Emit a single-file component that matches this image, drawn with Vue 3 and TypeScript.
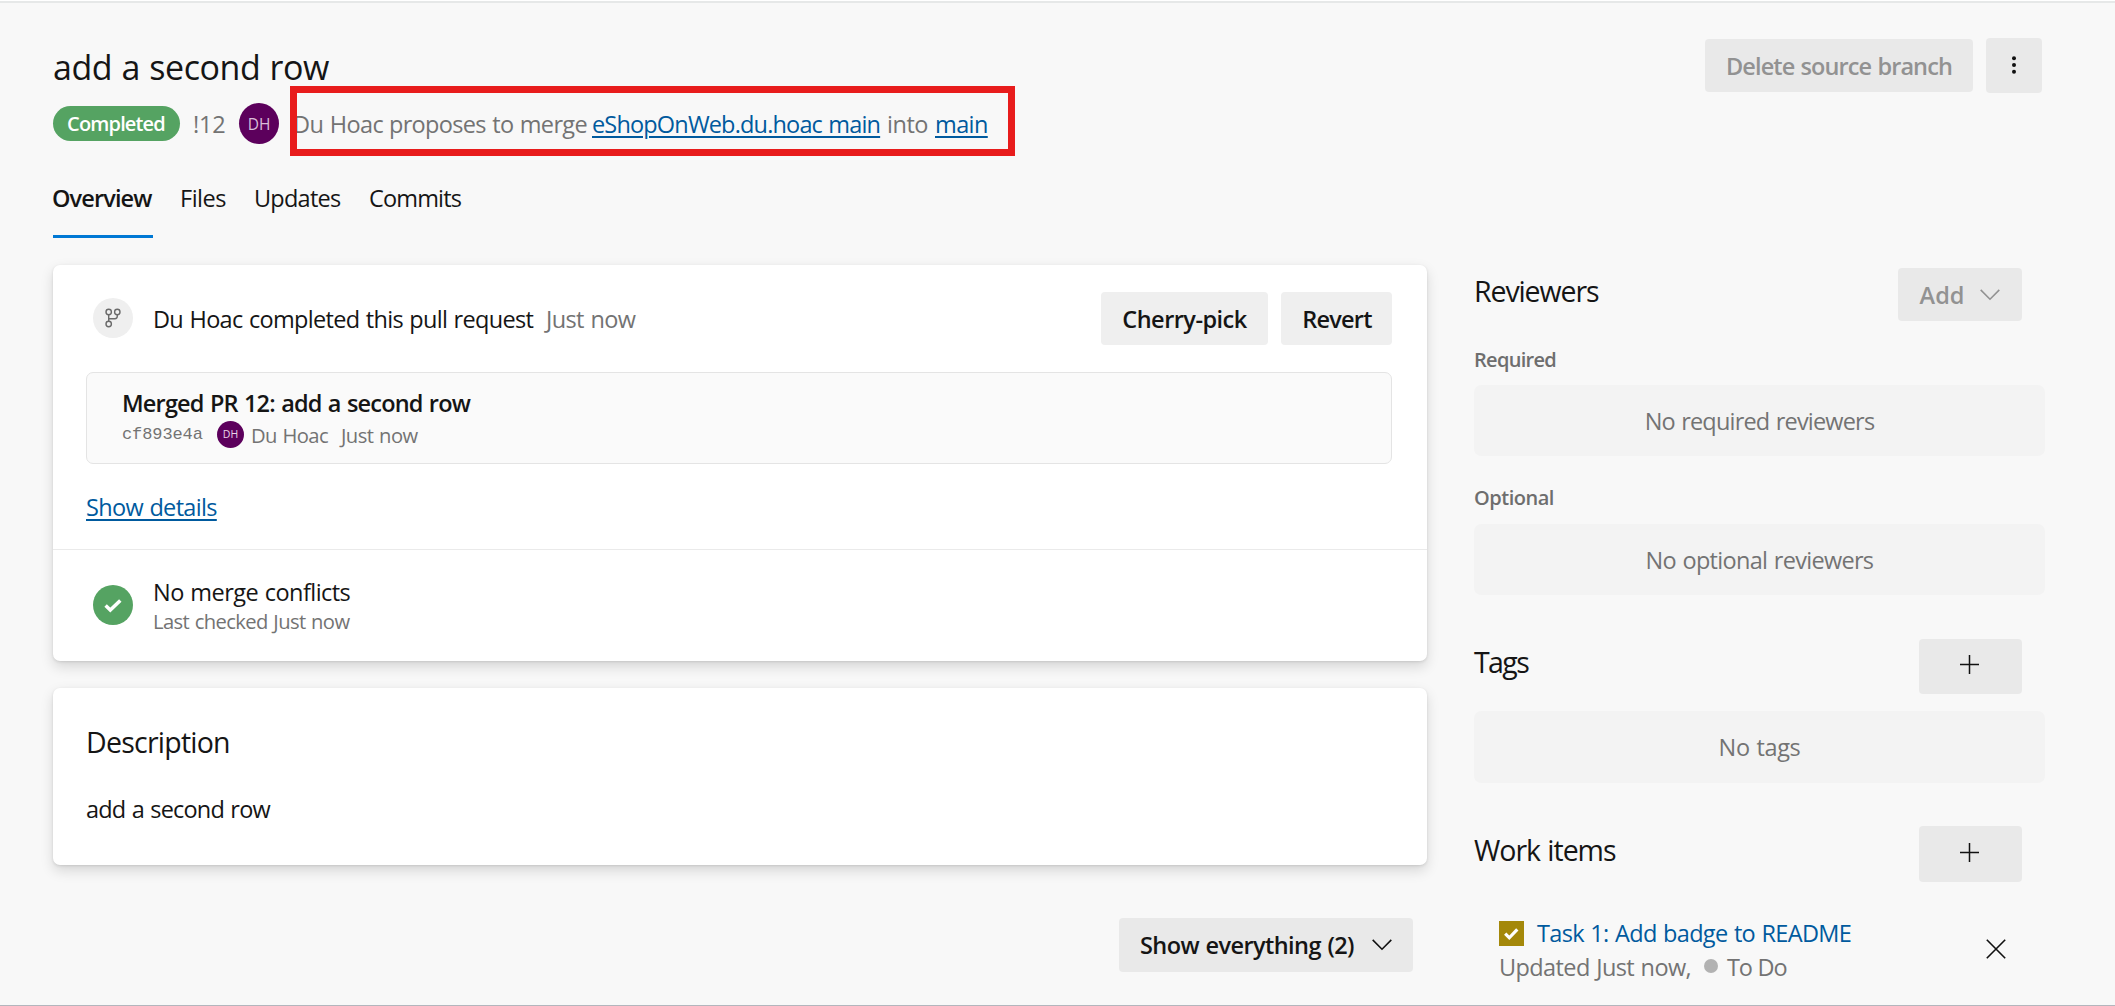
<script setup lang="ts">
interface Tab {
  id: string
  label: string
}

const tabs: Tab[] = [
  { id: 'overview', label: 'Overview' },
  { id: 'files', label: 'Files' },
  { id: 'updates', label: 'Updates' },
  { id: 'commits', label: 'Commits' },
]
const activeTab = 'overview'
</script>

<template>
  <div class="page">
    <header class="header">
      <div class="header-main">
        <h1 class="title">add a second row</h1>
        <div class="meta">
          <span class="badge">Completed</span>
          <span class="pr-id">!12</span>
          <span class="avatar">DH</span>
          <div class="proposal">
            <span class="author">Du Hoac</span>
            <span class="proposes">proposes to merge</span>
            <a class="link source">eShopOnWeb.du.hoac main</a>
            <span class="into">into</span>
            <a class="link target">main</a>
            <div class="highlight"></div>
          </div>
        </div>
        <nav class="tabs">
          <a v-for="tab in tabs" :key="tab.id" class="tab" :class="[tab.id, { active: tab.id === activeTab }]">{{ tab.label }}</a>
        </nav>
      </div>
      <div class="actions">
        <button class="btn delete" disabled>Delete source branch</button>
        <button class="btn more" aria-label="More options">
          <svg width="6" height="20" viewBox="0 0 6 20" fill="#111">
            <circle cx="3" cy="3.2" r="2" /><circle cx="3" cy="10" r="2" /><circle cx="3" cy="16.8" r="2" />
          </svg>
        </button>
      </div>
    </header>

    <div class="body">
      <main class="main">
        <section class="card status">
          <div class="status-row">
            <span class="branch-icon">
              <svg width="40" height="40" viewBox="0 0 40 40" fill="none" stroke="#6a6a6a" stroke-width="1.4">
                <circle cx="15.7" cy="14" r="2.7" /><circle cx="24.3" cy="14" r="2.7" /><circle cx="15.7" cy="26" r="2.7" />
                <path d="M15.7 16.7v6.6M24.3 16.7v1.6q0 2.4-2.4 2.4h-6.2" />
              </svg>
            </span>
            <span class="completed">Du Hoac completed this pull request</span>
            <span class="when">Just now</span>
            <button class="btn light cherry">Cherry-pick</button>
            <button class="btn light revert">Revert</button>
          </div>
          <div class="merge">
            <div class="merge-title">Merged PR 12: add a second row</div>
            <div class="merge-info">
              <span class="hash">cf893e4a</span>
              <span class="avatar small">DH</span>
              <span class="merge-author">Du Hoac</span>
              <span class="merge-when">Just now</span>
            </div>
          </div>
          <div class="details"><a class="link">Show details</a></div>
          <div class="conflicts">
            <svg class="ok" width="40" height="40" viewBox="0 0 40 40">
              <circle cx="20" cy="20" r="20" fill="#55a362" />
              <path d="M12.6 20.6l4.7 4.5 10-9.6" fill="none" stroke="#fff" stroke-width="3.5" />
            </svg>
            <div>
              <div class="conflict-title">No merge conflicts</div>
              <div class="conflict-sub">Last checked Just now</div>
            </div>
          </div>
        </section>

        <section class="card description">
          <h2 class="desc-heading">Description</h2>
          <p class="desc-text">add a second row</p>
        </section>

        <div class="filter">
          <button class="btn show-all">
            <span>Show everything (2)</span>
            <svg width="20" height="12" viewBox="0 0 20 12" fill="none" stroke="#111" stroke-width="1.6"><path d="M.7.9L10 10.2 19.3.9" /></svg>
          </button>
        </div>
      </main>

      <aside class="side">
        <div class="side-head reviewers">
          <h2>Reviewers</h2>
          <button class="btn add" disabled>
            <span>Add</span>
            <svg width="20" height="12" viewBox="0 0 20 12" fill="none" stroke="#929292" stroke-width="1.6"><path d="M.7.9L10 10.2 19.3.9" /></svg>
          </button>
        </div>
        <div class="label required">Required</div>
        <div class="empty no-required">No required reviewers</div>
        <div class="label optional">Optional</div>
        <div class="empty no-optional">No optional reviewers</div>

        <div class="side-head tags">
          <h2>Tags</h2>
          <button class="btn plus" aria-label="Add tag">
            <svg width="19" height="19" viewBox="0 0 19 19" stroke="#111" stroke-width="1.5"><path d="M9.5 0v19M0 9.5h19" /></svg>
          </button>
        </div>
        <div class="empty no-tags">No tags</div>

        <div class="side-head work">
          <h2>Work items</h2>
          <button class="btn plus" aria-label="Add work item">
            <svg width="19" height="19" viewBox="0 0 19 19" stroke="#111" stroke-width="1.5"><path d="M9.5 0v19M0 9.5h19" /></svg>
          </button>
        </div>
        <div class="item">
          <div class="item-text">
            <div class="item-title">
              <svg width="25" height="25" viewBox="0 0 25 25">
                <rect width="25" height="25" fill="#a4880a" />
                <path d="M6.2 12.6l4.1 4.2 8-8.4" fill="none" stroke="#fff" stroke-width="3.2" />
              </svg>
              <a>Task 1: Add badge to README</a>
            </div>
            <div class="item-info">
              <span class="updated">Updated Just now,</span>
              <i class="dot"></i>
              <span class="state">To Do</span>
            </div>
          </div>
          <svg class="remove" width="20" height="20" viewBox="0 0 20 20" stroke="#111" stroke-width="1.6"><path d="M.8.8l18.4 18.4M19.2.8L.8 19.2" /></svg>
        </div>
      </aside>
    </div>
  </div>
</template>

<style>
body {
  margin: 0;
  background: #f8f8f8;
}
</style>

<style scoped>
* {
  box-sizing: border-box;
}

.page {
  width: 2115px;
  height: 1006px;
  overflow: hidden;
  display: flex;
  flex-direction: column;
  background: #f8f8f8;
  border-top: 1px solid #fff;
  border-bottom: 1px solid #b3b6bd;
  color: #151515;
  font: 400 23.5px/32px 'Open Sans', 'Noto Sans', sans-serif;
  white-space: nowrap;
  word-spacing: 1px;
}

h1,
h2,
p {
  margin: 0;
  font-weight: 400;
}

.header {
  display: flex;
  justify-content: space-between;
  flex: none;
  height: 264px;
  padding: 0 73px 0 53px;
  border-top: 2px solid #e6e8e8;
}

.title {
  margin-top: 42px;
  font-size: 34px;
  line-height: 44px;
  letter-spacing: -0.46px;
}

.meta {
  display: flex;
  align-items: center;
  height: 41px;
  margin-top: 14px;
  color: #737373;
}

.badge {
  width: 127px;
  height: 35px;
  border-radius: 18px;
  background: #55a362;
  color: #fff;
  font-size: 20px;
  font-weight: 600;
  line-height: 35px;
  letter-spacing: -0.85px;
  text-align: center;
  padding-right: 1px;
}

.pr-id {
  width: 46px;
  margin-left: 13px;
  letter-spacing: -0.2px;
}

.avatar {
  display: flex;
  align-items: center;
  justify-content: center;
  flex: none;
  width: 40px;
  height: 41px;
  border-radius: 50%;
  background: #5c005c;
  color: #d9bfd9;
  font-size: 15.5px;
}

.proposal {
  display: flex;
  position: relative;
  margin-left: 14px;
}

.highlight {
  position: absolute;
  left: -3px;
  top: -21.5px;
  width: 724.5px;
  height: 69.5px;
  border: 7px solid #e81c1c;
}

.author {
  width: 96px;
  letter-spacing: -0.6px;
}

.proposes {
  width: 203px;
  letter-spacing: -0.68px;
}

.link {
  color: #005a9e;
  text-decoration: underline;
  text-decoration-thickness: 2px;
  text-underline-offset: 3px;
}

.source {
  width: 295px;
  letter-spacing: -0.83px;
}

.into {
  width: 48px;
  letter-spacing: -0.47px;
}

.target {
  letter-spacing: -0.6px;
}

.tabs {
  display: flex;
  height: 57px;
  margin-top: 37px;
}

.tab {
  margin-left: 26px;
  padding-top: 1px;
}

.tab.overview {
  width: 100px;
  margin: 0;
  border-bottom: 3px solid #0078d4;
  font-weight: 600;
  letter-spacing: -0.88px;
  text-indent: -1px;
}

.tab.files {
  width: 48px;
  margin-left: 27px;
  letter-spacing: -0.5px;
}

.tab.updates {
  width: 89px;
  letter-spacing: -0.76px;
}

.tab.commits {
  letter-spacing: -0.84px;
}

.btn {
  display: flex;
  align-items: center;
  justify-content: center;
  flex: none;
  height: 53px;
  padding: 0;
  border: 0;
  border-radius: 4px;
  background: #e9e9e9;
  color: #151515;
  font: inherit;
  font-weight: 600;
  word-spacing: 1px;
}

.btn:disabled {
  color: #929292;
}

.actions {
  display: flex;
  gap: 13px;
  padding-top: 36px;
}

.delete {
  width: 268px;
  letter-spacing: -0.9px;
}

.more {
  width: 56px;
  height: 55px;
  margin-top: -1px;
  padding-bottom: 2px;
}

.body {
  display: flex;
  flex: 1;
  min-height: 0;
  padding-left: 53px;
}

.main {
  width: 1374px;
}

.card {
  border-radius: 7px;
  background: #fff;
  box-shadow: 0 5.6px 12.6px rgba(0, 0, 0, 0.132), 0 1px 3px rgba(0, 0, 0, 0.108);
}

.status {
  height: 396px;
  padding-top: 27px;
}

.status-row {
  display: flex;
  align-items: center;
  height: 53px;
  padding: 0 35px 0 40px;
}

.branch-icon {
  width: 40px;
  height: 40px;
  margin: -1px 20px 0 0;
  border-radius: 50%;
  background: #efefef;
}

.branch-icon svg {
  display: block;
}

.completed {
  width: 393px;
  letter-spacing: -0.69px;
}

.when {
  flex: 1;
  color: #737373;
  letter-spacing: -0.6px;
}

.light {
  background: #efefef;
}

.cherry {
  width: 167px;
  letter-spacing: -0.53px;
}

.revert {
  width: 111px;
  margin-left: 13px;
  padding-left: 1px;
  letter-spacing: -0.78px;
}

.merge {
  width: 1306px;
  height: 92px;
  margin: 27px 0 0 33px;
  padding: 14px 0 0 35px;
  border: 1px solid #e4e4e4;
  border-radius: 7px;
  background: #fafafa;
}

.merge-title {
  font-weight: 600;
  letter-spacing: -0.82px;
}

.merge-info {
  display: flex;
  align-items: center;
  height: 28px;
  margin-top: 2px;
  color: #737373;
  font-size: 20.2px;
  line-height: 28px;
}

.hash {
  width: 95px;
  font: 400 17px/28px 'Liberation Mono', monospace;
  letter-spacing: -0.1px;
}

.avatar.small {
  width: 27px;
  height: 27px;
  margin-top: -2px;
  color: #e8d5e8;
  font-size: 10.5px;
}

.merge-author {
  width: 90px;
  margin-left: 7px;
  letter-spacing: -0.6px;
}

.merge-when {
  letter-spacing: -0.55px;
}

.details {
  height: 86px;
  padding: 27px 0 0 33px;
  border-bottom: 1px solid #eaeaea;
  letter-spacing: -0.67px;
}

.conflicts {
  display: flex;
  padding: 26px 0 0 40px;
}

.ok {
  margin: 9px 20px 0 0;
}

.conflict-title {
  letter-spacing: -0.54px;
}

.conflict-sub {
  margin-top: -1px;
  color: #737373;
  font-size: 20.2px;
  line-height: 28px;
  letter-spacing: -0.62px;
}

.description {
  height: 177px;
  margin-top: 27px;
  padding: 34px 0 0 33px;
}

.desc-heading {
  font-size: 28.5px;
  line-height: 40px;
  letter-spacing: -0.76px;
}

.desc-text {
  margin-top: 31px;
  letter-spacing: -0.8px;
}

.filter {
  display: flex;
  justify-content: flex-end;
  margin-top: 53px;
  padding-right: 14px;
}

.show-all {
  width: 294px;
  height: 54px;
  gap: 18px;
  letter-spacing: -0.58px;
}

.side {
  width: 571px;
  margin-left: 47px;
  padding-top: 3px;
}

.side-head {
  display: flex;
  justify-content: space-between;
  align-items: flex-start;
  padding-right: 23px;
}

.side-head h2 {
  padding-top: 3px;
  font-size: 28.5px;
  line-height: 40px;
}

.reviewers h2 {
  letter-spacing: -1.1px;
}

.tags h2 {
  letter-spacing: -1.6px;
}

.work h2 {
  padding-top: 4px;
  letter-spacing: -1.03px;
}

.add {
  width: 124px;
  gap: 16px;
}

.label {
  color: #6e6e6e;
  font-size: 20px;
  font-weight: 600;
  line-height: 28px;
}

.required {
  margin-top: 25px;
  letter-spacing: -0.7px;
}

.optional {
  margin-top: 28px;
  letter-spacing: -0.48px;
}

.empty {
  display: flex;
  align-items: center;
  justify-content: center;
  height: 71px;
  border-radius: 7px;
  background: #f3f3f3;
  color: #737373;
}

.no-required {
  margin-top: 11px;
  letter-spacing: -0.81px;
}

.no-optional {
  margin-top: 12px;
  letter-spacing: -0.69px;
}

.tags {
  margin-top: 44px;
}

.plus {
  width: 103px;
  height: 55px;
  padding: 0 2px 4px 0;
}

.no-tags {
  height: 72px;
  margin-top: 17px;
  letter-spacing: -0.35px;
}

.work {
  margin-top: 43px;
}

.work .plus {
  height: 56px;
}

.item {
  display: flex;
  justify-content: space-between;
  padding: 35px 39px 0 25px;
}

.item-title {
  display: flex;
  color: #005a9e;
  letter-spacing: -0.67px;
}

.item-title svg {
  margin: 4px 13px 0 0;
}

.item-info {
  display: flex;
  align-items: center;
  margin-top: 2px;
  color: #737373;
}

.updated {
  width: 205px;
  letter-spacing: -0.6px;
}

.dot {
  width: 14px;
  height: 14px;
  margin: -2px 9px 0 0;
  border-radius: 50%;
  background: #b2b2b2;
}

.state {
  letter-spacing: -1.2px;
}

.remove {
  margin-top: 22px;
}
</style>
